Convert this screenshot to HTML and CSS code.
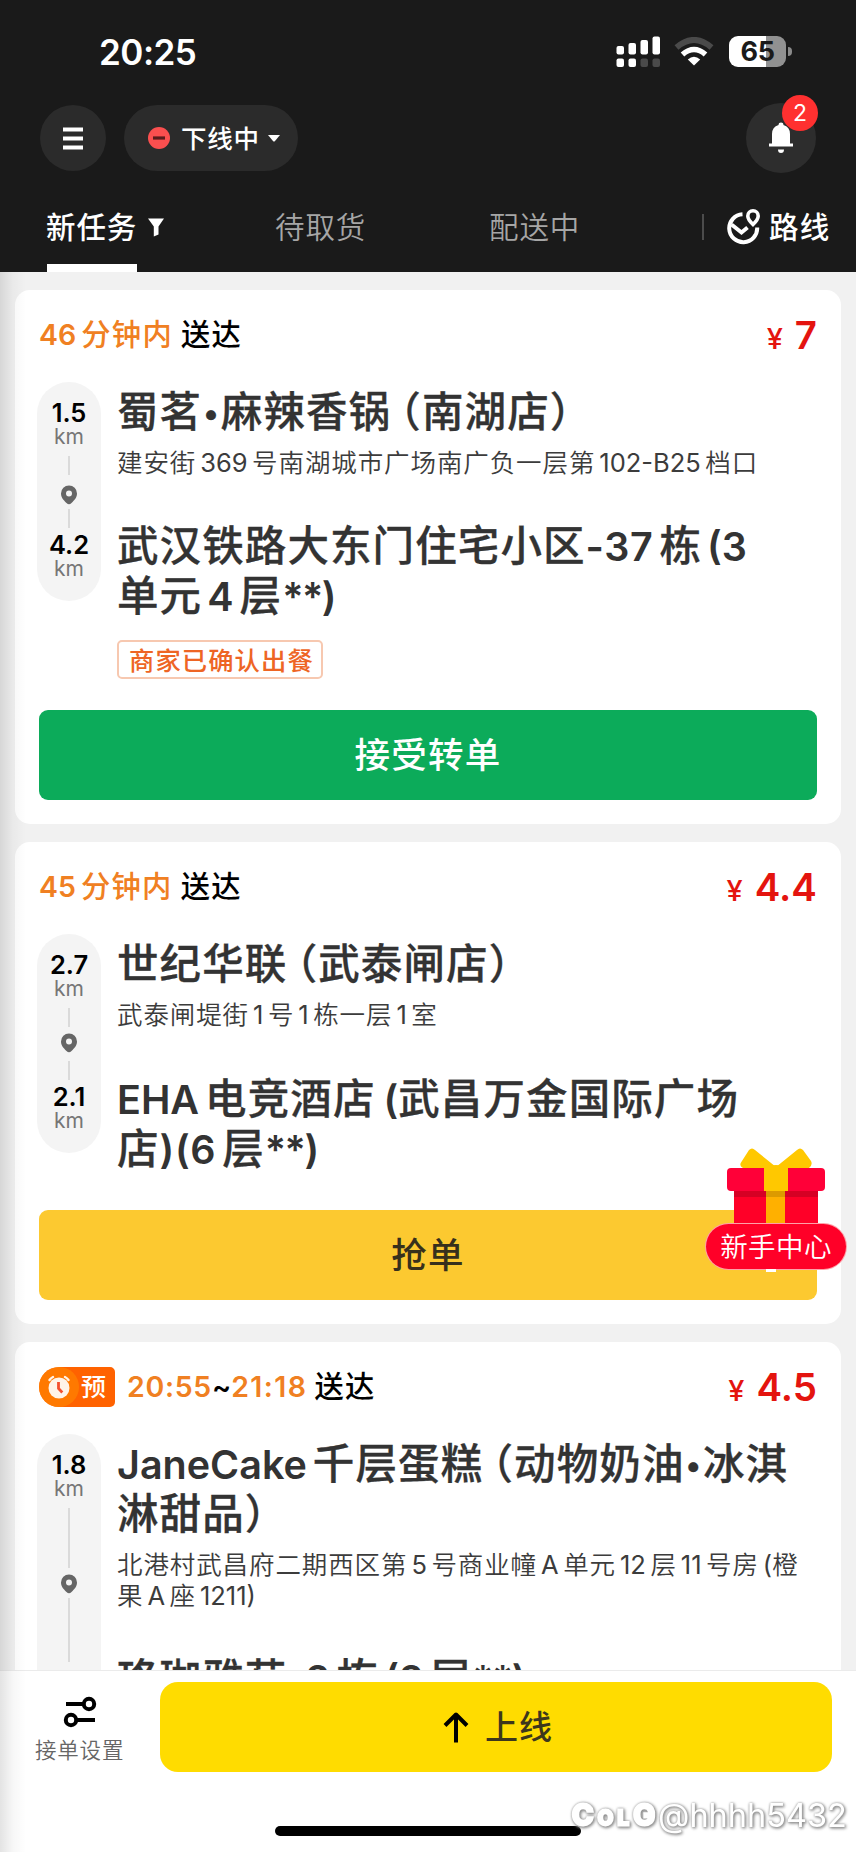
FILE: index.html
```html
<!DOCTYPE html>
<html lang="zh-CN">
<head>
<meta charset="utf-8">
<title>新任务</title>
<link rel="stylesheet" href="styles.css">
</head>
<body>
<div class="phone">
  <header class="top">
    <div class="status">
      <span class="clock">20:25</span>
      <div class="status-icons">
        <svg class="signal" width="44" height="32" viewBox="0 0 44 32" fill="#fff">
          <rect x="0.5" y="10" width="7.500" height="8.500" rx="2"/><rect x="12.500" y="7" width="7.500" height="11.500" rx="2"/><rect x="24.500" y="4" width="7.500" height="14.500" rx="2"/><rect x="36.500" y="0.500" width="7.500" height="18" rx="2"/>
          <rect x="0.500" y="22.500" width="7.500" height="8.500" rx="2"/><rect x="12.500" y="22.500" width="7.500" height="8.500" rx="2"/><rect x="24.500" y="22.500" width="7.500" height="8.500" rx="2" fill="#4a4a4a"/><rect x="36.500" y="22.500" width="7.500" height="8.500" rx="2" fill="#4a4a4a"/>
        </svg>
        <svg class="wifi" width="40" height="30" viewBox="0 0 40 30" fill="none">
          <path d="M2.500 10.500Q20 -4.500 37.500 10.500" stroke="#4a4a4a" stroke-width="6"/>
          <path d="M8.500 17.500Q20 7.500 31.500 17.500" stroke="#fff" stroke-width="5.500"/>
          <path d="M13.800 22.500Q20 17.200 26.200 22.500L20 28.600Z" fill="#fff"/>
        </svg>
        <div class="battery"><span class="battery-level">65</span><i class="battery-cap"></i></div>
      </div>
    </div>
    <div class="controls">
      <div class="menu-btn"><svg width="20" height="23" viewBox="0 0 20 23" fill="#fff"><path d="M0 0.500h20v4H0zM0 9.500h20v4H0zM0 18.500h20v4H0z"/></svg></div>
      <div class="state">
        <svg width="22" height="22" viewBox="0 0 22 22"><circle cx="11" cy="11" r="11" fill="#fa4f4f"/><path d="M5 11h12" stroke="#5a1c1c" stroke-width="3.200"/></svg>
        <span class="state-text">下线中</span>
        <svg width="12" height="7" viewBox="0 0 12 7"><path d="M0 0h12L6.800 6.200q-.8.8-1.600 0z" fill="#fff"/></svg>
      </div>
      <div class="bell">
        <svg width="26" height="32" viewBox="0 0 26 32" fill="#fff"><path d="M10.600 3V2.200Q10.600 0.500 13 0.500T15.400 2.200V3Q22 5 22 12V21.500H25V24.500H1V21.500H4V12Q4 5 10.600 3Z"/><path d="M10 27.500h6q0 3.500-3 3.500t-3-3.500Z"/></svg>
        <span class="badge">2</span>
      </div>
    </div>
    <nav class="tabs">
      <div class="tab tab-on">新任务</div>
      <svg class="filter" width="16" height="19" viewBox="0 0 16 19"><path d="M0 .5h16L10.500 8.500v8L5.800 18.500v-10z" fill="#fff"/></svg>
      <div class="tab tab-pick">待取货</div>
      <div class="tab tab-send">配送中</div>
      <i class="tab-sep"></i>
      <svg class="route" width="34" height="36" viewBox="0 0 34 36" fill="none" stroke="#fff" stroke-width="4">
        <path d="M15.500 5.200A14 14 0 1 0 30.200 18.500"/><path d="M4.500 15.500L14.500 23.500L20.500 18.500"/>
        <path d="M26 15.500Q20.800 10.500 20.800 7A5.200 5.200 0 0 1 31.200 7Q31.200 10.500 26 15.500Z" stroke-width="3.600"/>
      </svg>
      <span class="route-text">路线</span>
    </nav>
  </header>

  <main class="list">
    <section class="card">
      <div class="card-head">
        <div class="due"><span class="hot"><b>46</b>分钟内</span><span class="send">送达</span></div>
        <div class="price"><span class="yen">¥</span>7</div>
      </div>
      <div class="body">
        <div class="rail">
          <span class="dist">1.5</span><span class="unit">km</span>
          <i class="dash"></i>
          <svg class="pin pin-low" width="16" height="20" viewBox="0 0 16 20"><path fill-rule="evenodd" fill="#666" d="M8 .5a8 8 0 0 1 8 8c0 4-2.500 6.500-5.500 9.500q-2.500 2.500-5 0C2.500 15 0 12.500 0 8.500a8 8 0 0 1 8-8zm0 5a3 3 0 1 0 0 6a3 3 0 1 0 0-6z"/></svg>
          <i class="dash"></i>
          <span class="dist">4.2</span><span class="unit">km</span>
        </div>
        <div class="route-info">
          <h2 class="place">蜀茗<span class="dot">•</span>麻辣香锅<span class="open">（</span>南湖店）</h2>
          <p class="addr">建安街<b>369</b>号南湖城市广场南广负一层第<b>102-B25</b>档口</p>
          <h2 class="place dest">武汉铁路大东门住宅小区<b class="tight after">-37</b>栋<b>(3</b><br>单元<b>4</b>层<b class="stars">**)</b></h2>
          <span class="tag">商家已确认出餐</span>
        </div>
      </div>
      <button class="act accept">接受转单</button>
    </section>

    <section class="card">
      <div class="card-head">
        <div class="due"><span class="hot"><b>45</b>分钟内</span><span class="send">送达</span></div>
        <div class="price"><span class="yen">¥</span>4.4</div>
      </div>
      <div class="body">
        <div class="rail">
          <span class="dist">2.7</span><span class="unit">km</span>
          <i class="dash"></i>
          <svg class="pin" width="16" height="20" viewBox="0 0 16 20"><path fill-rule="evenodd" fill="#666" d="M8 .5a8 8 0 0 1 8 8c0 4-2.500 6.500-5.500 9.500q-2.500 2.500-5 0C2.500 15 0 12.500 0 8.500a8 8 0 0 1 8-8zm0 5a3 3 0 1 0 0 6a3 3 0 1 0 0-6z"/></svg>
          <i class="dash"></i>
          <span class="dist">2.1</span><span class="unit">km</span>
        </div>
        <div class="route-info">
          <h2 class="place">世纪华联<span class="open">（</span>武泰闸店）</h2>
          <p class="addr">武泰闸堤街<b class="one">1</b>号<b class="one">1</b>栋一层<b class="one">1</b>室</p>
          <h2 class="place dest dest-low"><b class="first">EHA</b>电竞酒店<b class="paren">(</b>武昌万金国际广场<br>店<b class="tight after">)(6</b>层<b class="stars">**)</b></h2>
        </div>
      </div>
      <button class="act grab">抢单</button>
    </section>

    <section class="card card-long">
      <div class="card-head">
        <div class="due">
          <span class="booked">
            <svg width="40" height="40" viewBox="0 0 40 40"><circle cx="20" cy="20" r="20" fill="#ff8200" opacity=".75"/><circle cx="20" cy="21" r="10.500" fill="#fff4e8"/><path d="M10.500 13q1.500-2 3.500-3M29.500 13q-1.500-2-3.500-3" stroke="#fff4e8" stroke-width="2.400" stroke-linecap="round" fill="none"/><path d="M19.500 15v6.500l3.800 4" stroke="#f4502e" stroke-width="2.800" fill="none"/></svg>预
          </span>
          <span class="hot"><b class="from">20:55</b></span><b class="tilde">~</b><span class="hot"><b class="to">21:18</b></span><span class="send">送达</span>
        </div>
        <div class="price"><span class="yen">¥</span>4.5</div>
      </div>
      <div class="body">
        <div class="rail">
          <span class="dist">1.8</span><span class="unit">km</span>
          <i class="dash dash-a"></i>
          <svg class="pin pin-long" width="16" height="20" viewBox="0 0 16 20"><path fill-rule="evenodd" fill="#666" d="M8 .5a8 8 0 0 1 8 8c0 4-2.500 6.500-5.500 9.500q-2.500 2.500-5 0C2.500 15 0 12.500 0 8.500a8 8 0 0 1 8-8zm0 5a3 3 0 1 0 0 6a3 3 0 1 0 0-6z"/></svg>
          <i class="dash dash-b"></i>
          <span class="dist">2.1</span><span class="unit">km</span>
        </div>
        <div class="route-info">
          <h2 class="place"><b class="first">JaneCake</b>千层蛋糕<span class="open">（</span>动物奶油<span class="dot">•</span>冰淇<br>淋甜品）</h2>
          <p class="addr">北港村武昌府二期西区第<b>5</b>号商业幢<b>A</b>单元<b>12</b>层<b>11</b>号房<b class="paren">(</b>橙<br>果<b>A</b>座<b>1211)</b></p>
          <h2 class="place dest">珞珈雅苑<b class="tight after">-2</b>栋<b>(2</b>层<b class="stars">**)</b></h2>
        </div>
      </div>
    </section>
  </main>

  <footer class="bottom">
    <div class="bar">
      <div class="settings">
        <svg width="34" height="32" viewBox="0 0 34 32" fill="none" stroke="#000"><path d="M3 8h19M14 24h18" stroke-width="4"/><circle cx="26" cy="8" r="5.200" stroke-width="4"/><circle cx="8" cy="24" r="5.200" stroke-width="4"/></svg>
        <span>接单设置</span>
      </div>
      <button class="online">
        <svg width="26" height="31" viewBox="0 0 26 31" fill="none" stroke="#000" stroke-width="4"><path d="M13 30.500V3M2 13.500L13 2.500L24 13.500" stroke-linejoin="round" stroke-linecap="butt"/></svg>
        <span>上线</span>
      </button>
    </div>
    <i class="home"></i>
    <div class="mark"><span class="mark-logo"><span>C</span><span class="sm">O</span><span class="sm">L</span><span>G</span></span><span class="mark-user">@hhhh5432</span></div>
  </footer>

  <div class="gift">
    <svg width="98" height="77" viewBox="0 0 98 77">
      <path d="M14 14.500L22 2Q25 -1 28 2L49 19L70 2Q73 -1 76 2L84 13Q86 17 82 20H16Q12 18 14 14.500Z" fill="#ffc800"/>
      <path d="M38 20L43 18Q49 16 55 18L60 20Z" fill="#ffc800"/>
      <rect x="7" y="40" width="84" height="37" fill="#ff0028"/><rect x="7" y="40" width="84" height="9" fill="#d60024"/>
      <rect x="39" y="40" width="19" height="37" fill="#ffb000"/><rect x="39" y="40" width="19" height="9" fill="#dc9a00"/>
      <rect x="0" y="20" width="98" height="23" rx="4" fill="#ff0038"/><rect x="37" y="18" width="24" height="25" fill="#ffc800"/>
    </svg>
    <span class="gift-text">新手中心</span>
    <i class="gift-tip"></i>
  </div>
  <div class="edge"></div>
</div>
</body>
</html>
```

FILE: styles.css
```css
* { box-sizing: border-box; }
body { margin: 0; font-family: Inter, "Noto Sans CJK SC", sans-serif; text-autospace: no-autospace; }
svg { display: block; flex: none; }
i { display: block; flex: none; }
button { border: 0; padding: 0; font-family: inherit; }
.phone { position: relative; width: 856px; height: 1852px; overflow: hidden; display: flex; flex-direction: column; background: #f1f1f1; }

.top { height: 272px; flex: none; background: #1a1a1a; color: #fff; }
.status { height: 103px; padding: 0 64px 0 99px; display: flex; justify-content: space-between; align-items: center; }
.clock { font-size: 35px; font-weight: 600; line-height: 42px; letter-spacing: -0.5px; }
.status-icons { display: flex; align-items: center; }
.wifi { margin-left: 14px; }
.battery { position: relative; width: 57px; height: 31px; margin: 0 6px 0 15px; border-radius: 9px; background: linear-gradient(90deg, #fff 65%, #919191 65%); }
.battery-level { display: block; text-align: center; color: #1a1a1a; font-size: 27px; line-height: 31px; font-weight: 700; letter-spacing: -0.5px; }
.battery-cap { position: absolute; right: -6px; top: 11px; width: 4px; height: 9px; background: #8a8a8a; border-radius: 0 4px 4px 0; }

.controls { height: 70px; padding: 0 40px; display: flex; align-items: center; }
.menu-btn { width: 66px; height: 66px; border-radius: 50%; background: #2b2b2b; display: flex; align-items: center; justify-content: center; }
.state { width: 174px; height: 66px; margin-left: 18px; padding-left: 24px; border-radius: 33px; background: #2b2b2b; display: flex; align-items: center; }
.state-text { font-size: 25.5px; font-weight: 500; letter-spacing: 0.8px; line-height: 40px; margin: 0 8px 0 11px; padding-top: 2px; }
.bell { position: relative; width: 70px; height: 70px; margin-left: auto; border-radius: 50%; background: #2d2d2d; display: flex; align-items: center; justify-content: center; }
.badge { position: absolute; right: -2px; top: -8px; width: 36px; height: 36px; border-radius: 50%; background: #ff3030; text-align: center; font-size: 23px; line-height: 36px; }

.tabs { height: 99px; padding: 8px 26px 0 46px; display: flex; }
.tab { width: 91px; height: 91px; font-size: 29.5px; line-height: 93px; letter-spacing: 0.9px; color: #a6a6a6; font-weight: 350; white-space: nowrap; }
.tab-on { color: #fff; font-weight: 500; background: linear-gradient(#fff, #fff) 1px 100% / 90px 8px no-repeat; }
.filter { margin: 37px 0 0 11px; }
.tab-pick { margin-left: 111px; }
.tab-send { margin-left: 123px; }
.tab-sep { width: 2px; height: 26px; margin: 33px 0 0 122px; background: #4c4c4c; }
.route { margin: 28px 0 0 23px; }
.route-text { font-size: 29.5px; line-height: 93px; font-weight: 500; letter-spacing: 1.2px; margin-left: 8px; white-space: nowrap; }

.list { flex: 1; min-height: 0; overflow: hidden; padding: 18px 15px 0; display: flex; flex-direction: column; gap: 18px; }
.card { flex: none; padding: 0 24px 24px; border-radius: 15px; background: #fff; }
.card-head { height: 90px; margin-bottom: 2px; display: flex; justify-content: space-between; align-items: center; }
.due { display: flex; align-items: center; font-size: 29.3px; line-height: 40px; font-weight: 500; letter-spacing: 1.3px; color: #000; }
.due b { font-weight: 600; font-size: 28.5px; line-height: 0; letter-spacing: 0; }
.hot { color: #f08022; }
.hot b { margin-right: 5px; }
.send { margin-left: 8px; }
.price { color: #e4140f; font-size: 38.5px; font-weight: 600; line-height: 50px; }
.yen { font-size: 29px; line-height: 0; font-weight: 500; margin-right: 12px; }
.booked { width: 76px; height: 40px; margin-right: 12px; display: flex; align-items: center; background: #ff6200; color: #fff; font-size: 25px; letter-spacing: 0; border-radius: 20px 5px 5px 20px; gap: 2px; white-space: nowrap; }
.card-long .hot b, .tilde { margin: 0; }
.card-long .from { letter-spacing: 0.7px; }
.card-long .to { letter-spacing: 1.4px; }
.card-long .send { margin-left: 7px; }

.body { display: flex; margin-left: -2px; align-items: flex-start; }
.rail { width: 64px; padding: 18px 0 21px; flex: none; display: flex; flex-direction: column; align-items: center; background: #f4f4f4; border-radius: 32px; }
.dist { font-size: 25.5px; line-height: 26px; font-weight: 600; color: #000; }
.unit { font-size: 21px; line-height: 22px; color: #767676; }
.dash { width: 2px; height: 19px; margin-top: 8px; background: #dadada; }
.pin { margin-top: 6px; }
.pin + .dash { margin: 8px 0 4px; }
.pin-low { margin-top: 10px; }
.pin-low + .dash { margin-top: 4px; }
.dash-a { height: 60px; }
.pin-long + .dash-b { height: 64px; margin: 4px 0 6px; }

.route-info { padding: 5px 0 0 16px; white-space: nowrap; }
.place { margin: 0; font-size: 41.5px; line-height: 50px; font-weight: 500; letter-spacing: 1.1px; color: #333; -webkit-text-stroke: 0.3px #333; }
.place b { font-weight: 600; letter-spacing: 0; font-size: 39.5px; line-height: 0; margin: 0 6px 0 5px; -webkit-text-stroke: 0; }
.place .tight { margin: 0; letter-spacing: 0.6px; }
.place .after { margin-right: 6px; }
.place .stars { margin: 0; letter-spacing: -1.5px; }
.place .first { margin-left: 0; }
.place .paren { margin-right: 0; margin-left: 8px; }
.dot { display: inline-block; width: 18.5px; font-size: 31px; line-height: 0; letter-spacing: 0; text-align: center; text-indent: -1px; vertical-align: 3px; }
.open { display: inline-block; margin-left: 9px; font-feature-settings: "halt"; }
.addr { margin: 10px 0 0; font-size: 25.5px; line-height: 31px; font-weight: 350; letter-spacing: 0.9px; color: #3c3c3c; }
.addr b { font-weight: 400; letter-spacing: 0; margin: 0 4.500px 0 4px; }
.addr .one { margin: 0 4.500px 0 4px; }
.addr .paren { margin-right: 0; }
.dest { margin-top: 43px; }
.dest-low { margin-top: 44px; }
.tag { display: block; width: 206px; height: 39px; margin-top: 19px; padding-left: 10px; border: 2px solid #f7c8b0; border-radius: 5px; font-size: 25.3px; line-height: 37px; font-weight: 500; letter-spacing: 1.1px; color: #ee6524; }
.act { display: block; width: 778px; height: 90px; border-radius: 9px; text-align: center; font-size: 35.5px; line-height: 92px; font-weight: 500; letter-spacing: 1.3px; }
.accept { margin-top: 31px; background: #0cab5a; color: #fff; }
.grab { margin-top: 36px; background: #fcc930; color: #37301c; }

.bottom { position: relative; height: 182px; flex: none; border-top: 1px solid #ebebeb; background: #fff; }
.bar { display: flex; padding: 11px 24px 0 35px; height: 101px; }
.settings { width: 125px; display: flex; flex-direction: column; padding-top: 14px; color: #666; font-size: 21.5px; line-height: 30px; font-weight: 350; letter-spacing: 0.8px; gap: 7px; }
.settings svg { margin-left: 28px; }
.online { width: 672px; height: 90px; padding-left: 4px; border-radius: 18px; background: #ffdc00; display: flex; align-items: center; justify-content: center; gap: 16px; color: #3d371c; font-size: 33px; font-weight: 500; line-height: 90px; letter-spacing: 1px; }
.home { width: 306px; height: 10px; margin: 54px 0 0 275px; border-radius: 5px; background: #000; }
.mark { position: absolute; left: 571px; top: 123px; height: 44px; display: flex; align-items: center; color: #fff; white-space: nowrap; filter: drop-shadow(1px 1px 1.500px #888) drop-shadow(0 0 1px #aaa); }
.mark-logo { width: 87px; display: flex; align-items: baseline; justify-content: space-between; padding: 0 3px 0 1px; font-size: 29px; line-height: 44px; font-weight: 700; -webkit-text-stroke: 3px #fff; }
.mark-logo .sm { font-size: 20px; }
.mark-user { font-size: 32.5px; line-height: 44px; font-weight: 400; }

.gift { position: absolute; left: 706px; top: 1148px; width: 140px; display: flex; flex-direction: column; align-items: center; }
.gift-text { width: 140px; height: 45px; margin-top: -1px; border-radius: 23px; background: #ff0028; box-shadow: 0 0 0 1px #ffa0a8; color: #fff; font-size: 27.5px; line-height: 46px; font-weight: 350; letter-spacing: 0.4px; text-align: center; white-space: nowrap; }
.gift-tip { width: 10px; height: 3px; margin-left: -10px; background: #fff; }
.edge { position: absolute; left: 0; top: 272px; width: 26px; height: 1580px; background: linear-gradient(90deg, rgba(0,0,0,.11), rgba(0,0,0,.03) 50%, transparent); }
```
